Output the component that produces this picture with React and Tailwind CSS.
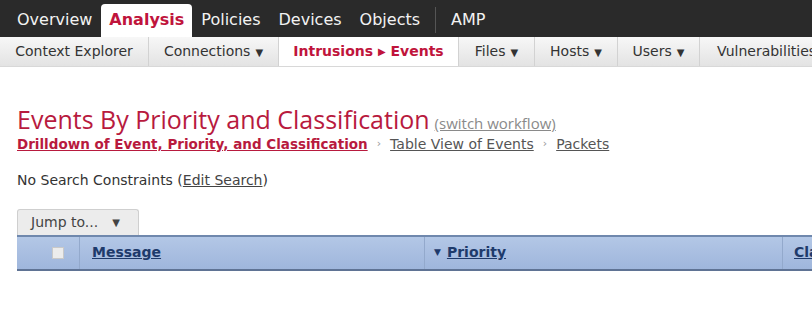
import React from 'react';

const topItems = ['Overview', 'Analysis', 'Policies', 'Devices', 'Objects'];
const subItems = [
    { label: 'Context Explorer', w: 'w-[149px]' },
    { label: 'Connections', caret: true, w: 'w-[130px]' },
    { label: 'Intrusions', active: true, w: 'w-[180px]' },
    { label: 'Files', caret: true, w: 'w-[76px]' },
    { label: 'Hosts', caret: true, w: 'w-[83px]' },
    { label: 'Users', caret: true, w: 'w-[82px]' },
    { label: 'Vulnerabilities', caret: true, w: 'w-[130px]', left: true },
];

export default function App() {
    return (
        <div className="w-[812px] h-[320px] overflow-hidden bg-white font-['DejaVu_Sans',sans-serif]">
            {/* Top nav */}
            <div className="h-[37px] bg-[#2a2a2a] flex items-end pl-[8px] text-[16px]">
                {topItems.map((item) =>
                    item === 'Analysis' ? (
                        <div key={item} className="h-[33px] px-[8px] bg-white rounded-t-[4px] flex items-center pb-[2px] text-[#c0143c] font-bold">
                            {item}
                        </div>
                    ) : (
                        <div key={item} className="h-[33px] px-[9px] flex items-center pb-[2px] text-[#f2f2f2]">
                            {item}
                        </div>
                    )
                )}
                <div className="w-px h-[26px] bg-[#555] mb-[4px] mx-[6px]" />
                <div className="h-[33px] px-[9px] flex items-center pb-[2px] text-[#f2f2f2]">AMP</div>
            </div>

            {/* Sub nav */}
            <div className="h-[30px] flex bg-gradient-to-b from-[#f7f7f7] to-[#e3e3e3] border-b border-[#d8d8d8] text-[14px] text-[#333]">
                {subItems.map((s) => (
                    <div
                        key={s.label}
                        className={`${s.w} shrink-0 flex items-center whitespace-nowrap border-r border-[#d2d2d2] ${s.left ? 'justify-start pl-[17px]' : 'justify-center'} ${s.active ? 'bg-white text-[#c0143c] font-bold' : ''}`}
                    >
                        {s.active ? (
                            <span>Intrusions <span className="text-[10px] relative -top-px">▶</span> Events</span>
                        ) : (
                            <span>{s.label}{s.caret && <span className="text-[10px] ml-[5px]">▼</span>}</span>
                        )}
                    </div>
                ))}
            </div>

            {/* Heading */}
            <div className="pl-[17px] pt-[38px]">
                <div className="flex items-baseline">
                    <h1 className="text-[25px] leading-[28px] text-[#b81a3e] font-['Open_Sans',sans-serif]">Events By Priority and Classification</h1>
                    <a className="ml-[5px] text-[15px] text-[#8a8a8a] underline font-['Open_Sans',sans-serif]">(switch workflow)</a>
                </div>
                <div className="flex items-center text-[14px] -mt-[1px]">
                    <a className="font-bold text-[13.5px] text-[#b81a3e] underline">Drilldown of Event, Priority, and Classification</a>
                    <span className="mx-[9px] text-[#999] text-[11px]">›</span>
                    <a className="text-[#555] underline">Table View of Events</a>
                    <span className="mx-[9px] text-[#999] text-[11px]">›</span>
                    <a className="text-[#555] underline">Packets</a>
                </div>
                <div className="mt-[15px] text-[14px] text-[#333]">
                    No Search Constraints (<a className="underline text-[#444]">Edit Search</a>)
                </div>
            </div>

            {/* Jump to + table header */}
            <div className="pl-[17px] mt-[18px]">
                <div className="w-[122px] h-[26px] bg-[#ececec] border border-[#cfcfcf] border-b-0 rounded-t-[3px] flex items-center pl-[13px] text-[14px] text-[#444]">
                    Jump to... <span className="text-[10px] ml-[14px]">▼</span>
                </div>
                <div className="h-[36px] flex items-stretch overflow-hidden bg-gradient-to-b from-[#b3c7e6] to-[#9fb6dc] border-t-2 border-[#6f88ad] border-b-2 border-b-[#5f7394] text-[14px] font-bold text-[#1e3a6b]">
                    <div className="w-[63px] shrink-0 border-r border-[#93a9cc] flex items-center pl-[35px]">
                        <div className="w-[12px] h-[12px] bg-[#ececec] border border-[#c9c9c9]" />
                    </div>
                    <div className="w-[345px] shrink-0 border-r border-[#93a9cc] flex items-center pl-[12px]">
                        <span className="underline">Message</span>
                    </div>
                    <div className="w-[358px] shrink-0 border-r border-[#93a9cc] flex items-center pl-[9px]">
                        <span className="text-[9px] mr-[6px]">▼</span>
                        <span className="underline">Priority</span>
                    </div>
                    <div className="shrink-0 flex items-center pl-[11px] whitespace-nowrap">
                        <span className="underline">Classification</span>
                    </div>
                </div>
            </div>
        </div>
    );
}
